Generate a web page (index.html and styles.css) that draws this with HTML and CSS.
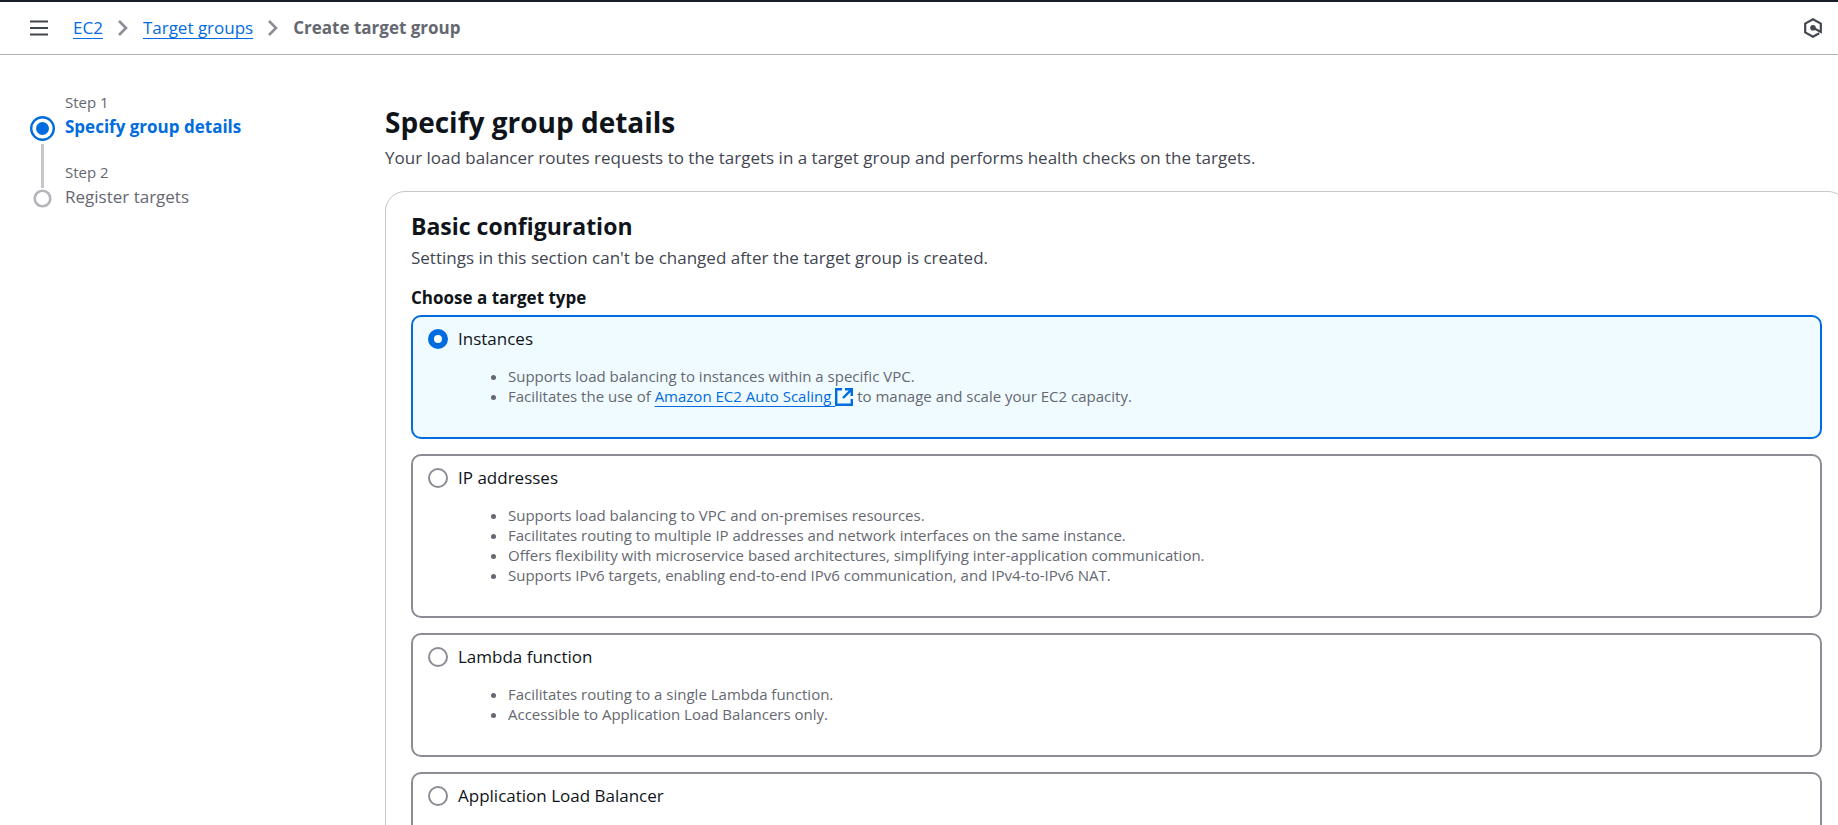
FILE: index.html
```html
<!DOCTYPE html>
<html lang="en">
<head>
<meta charset="utf-8">
<title>Create target group | EC2</title>
<link rel="stylesheet" href="styles.css">
</head>
<body>
<header class="topbar">
  <button class="icon-button" type="button" aria-label="Open navigation">
    <svg width="18" height="16" viewBox="0 0 18 16" fill="none" stroke="currentColor" stroke-width="2.2"><path d="M0 1.5h18M0 8h18M0 14.5h18"/></svg>
  </button>
  <nav class="breadcrumbs" aria-label="Breadcrumbs">
    <a class="link" href="#">EC2</a>
    <svg class="chevron" width="10" height="16" viewBox="0 0 10 16" fill="none" stroke="currentColor" stroke-width="2.6"><path d="M1 1l7 7-7 7"/></svg>
    <a class="link" href="#">Target groups</a>
    <svg class="chevron" width="10" height="16" viewBox="0 0 10 16" fill="none" stroke="currentColor" stroke-width="2.6"><path d="M1 1l7 7-7 7"/></svg>
    <span class="current">Create target group</span>
  </nav>
  <button class="icon-button" type="button" aria-label="Open assistant">
    <svg width="18" height="20" viewBox="0 0 18 20" fill="none" stroke="currentColor" stroke-width="2.2"><path d="M9 9.8l7.8 4.2V5.6L9 1.3 1.2 5.6v8.8L9 18.7l6.2-3.4"/><circle cx="9" cy="9.8" r="2.8" fill="currentColor" stroke="none"/></svg>
  </button>
</header>
<div class="layout">
  <nav class="steps" aria-label="Steps">
    <ol class="step-list">
      <li class="step step-active">
        <span class="step-rail"><svg width="25" height="25" viewBox="0 0 25 25"><circle cx="12.5" cy="12.5" r="11.3" fill="none" stroke="currentColor" stroke-width="2.4"/><circle cx="12.5" cy="12.5" r="6.5" fill="currentColor"/></svg><span class="step-line"></span></span>
        <span class="step-text"><span class="step-number">Step 1</span><span class="step-title">Specify group details</span></span>
      </li>
      <li class="step">
        <span class="step-rail"><svg width="25" height="25" viewBox="0 0 25 25"><circle cx="12.5" cy="12.5" r="7.8" fill="none" stroke="currentColor" stroke-width="2.6"/></svg></span>
        <span class="step-text"><span class="step-number">Step 2</span><span class="step-title">Register targets</span></span>
      </li>
    </ol>
  </nav>
  <main class="content">
    <h1 class="page-title">Specify group details</h1>
    <p class="description">Your load balancer routes requests to the targets in a target group and performs health checks on the targets.</p>
    <section class="panel">
      <h2 class="panel-title">Basic configuration</h2>
      <p class="description">Settings in this section can't be changed after the target group is created.</p>
      <fieldset class="types">
        <legend class="types-label">Choose a target type</legend>
        <div class="tiles">
          <div class="tile tile-selected">
            <label class="tile-label"><input class="radio" type="radio" name="target-type" checked>Instances</label>
            <ul class="tile-list">
              <li>Supports load balancing to instances within a specific VPC.</li>
              <li>Facilitates the use of <a class="link" href="#">Amazon EC2 Auto Scaling&nbsp;</a><svg class="external" width="18" height="18" viewBox="0 0 18 18" fill="none" stroke="currentColor" stroke-width="2.4"><path d="M7 1.2H1.2v15.6h15.6V11M10 1.2h6.8V8M16.2 1.8L8 10"/></svg> to manage and scale your EC2 capacity.</li>
            </ul>
          </div>
          <div class="tile">
            <label class="tile-label"><input class="radio" type="radio" name="target-type">IP addresses</label>
            <ul class="tile-list">
              <li>Supports load balancing to VPC and on-premises resources.</li>
              <li>Facilitates routing to multiple IP addresses and network interfaces on the same instance.</li>
              <li>Offers flexibility with microservice based architectures, simplifying inter-application communication.</li>
              <li>Supports IPv6 targets, enabling end-to-end IPv6 communication, and IPv4-to-IPv6 NAT.</li>
            </ul>
          </div>
          <div class="tile">
            <label class="tile-label"><input class="radio" type="radio" name="target-type">Lambda function</label>
            <ul class="tile-list">
              <li>Facilitates routing to a single Lambda function.</li>
              <li>Accessible to Application Load Balancers only.</li>
            </ul>
          </div>
          <div class="tile">
            <label class="tile-label"><input class="radio" type="radio" name="target-type">Application Load Balancer</label>
          </div>
        </div>
      </fieldset>
    </section>
  </main>
</div>
</body>
</html>
```
FILE: styles.css
```css
* { box-sizing: border-box; }

html { overflow: hidden; }

body {
  margin: 0;
  background: #fff;
  color: #0f141a;
  font-family: "Open Sans", "Noto Sans", sans-serif;
  font-size: 17px;
  line-height: 25px;
}

h1, h2, p, ul, ol, fieldset { margin: 0; padding: 0; }

.topbar {
  display: flex;
  align-items: center;
  height: 55px;
  padding: 0 16px 0 30px;
  border-top: 2px solid #161d2b;
  border-bottom: 1px solid #b4b4bb;
}

.icon-button {
  display: flex;
  padding: 0;
  border: 0;
  background: none;
  color: #424650;
}

.breadcrumbs {
  display: flex;
  flex: 1;
  align-items: center;
  gap: 15px;
  margin-left: 25px;
  padding-bottom: 1px;
}

.link {
  color: #006ce0;
  text-decoration: underline;
  text-decoration-thickness: 1px;
  text-underline-offset: 4px;
}

.chevron { color: #8c8c94; }

.current {
  color: #656871;
  font-weight: 700;
}

.layout {
  display: flex;
  align-items: flex-start;
}

.steps {
  flex: 0 0 385px;
  padding: 37px 20px 0 30px;
}

.step-list { list-style: none; }

.step {
  display: flex;
  gap: 10px;
  height: 70px;
  color: #656871;
}

.step-rail {
  display: flex;
  flex-direction: column;
  align-items: center;
  gap: 3px;
  width: 25px;
  padding-top: 24px;
  color: #b4b4bb;
}

.step-rail svg { flex: none; }

.step-line {
  flex: none;
  width: 3px;
  height: 44px;
  background: #c6c6cd;
}

.step-text {
  display: flex;
  flex-direction: column;
  gap: 2px;
}

.step-number {
  font-size: 15px;
  line-height: 20px;
}

.step-active .step-rail svg,
.step-active .step-title { color: #006ce0; }

.step-active .step-title { font-weight: 700; }

.content {
  flex: 1;
  min-width: 0;
  margin-right: -10px;
  padding-top: 48px;
}

.page-title {
  font-size: 28px;
  line-height: 38px;
}

.description {
  padding-top: 4px;
  color: #424650;
}

.panel {
  margin-top: 21px;
  padding: 19px 25px;
  border: 1px solid #c6c6cd;
  border-radius: 20px;
}

.panel-title {
  font-size: 23px;
  line-height: 30px;
}

.types {
  margin-top: 15px;
  border: 0;
}

.types-label {
  padding: 0;
  font-weight: 700;
}

.tiles {
  display: grid;
  gap: 15px;
  margin-top: 5px;
}

.tile {
  padding: 9px 15px 31px;
  border: 2px solid #8c8c94;
  border-radius: 10px;
}

.tile-selected {
  border-color: #006ce0;
  background: #f0fbff;
}

.tile-label {
  display: flex;
  align-items: center;
  gap: 10px;
}

.radio {
  appearance: none;
  width: 20px;
  height: 20px;
  margin: 0;
  border: 2px solid #8c8c94;
  border-radius: 50%;
  background: #fff;
}

.radio:checked { border: 6px solid #006ce0; }

.tile-list {
  margin-top: 15px;
  padding-left: 80px;
  color: #656871;
  font-size: 15px;
  line-height: 20px;
}

.external {
  color: #006ce0;
  vertical-align: -4px;
}
```
